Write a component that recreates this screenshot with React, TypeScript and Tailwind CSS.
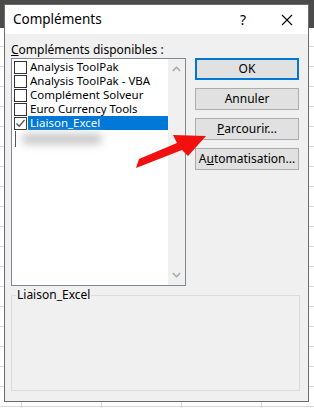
import React from 'react';

const items = ['Analysis ToolPak', 'Analysis ToolPak - VBA', 'Complément Solveur', 'Euro Currency Tools'];

function Check({ checked }: { checked?: boolean }) {
  return (
    <div className="w-[13px] h-[13px] border border-[#333333] bg-white shrink-0 flex items-center justify-center">
      {checked && (
        <svg width="11" height="11" viewBox="0 0 11 11">
          <path d="M1.5 5.5 L4.2 8.2 L9.5 2" fill="none" stroke="#555" strokeWidth="1.3" />
        </svg>
      )}
    </div>
  );
}

function Btn({ children, primary }: { children: React.ReactNode; primary?: boolean }) {
  return (
    <div
      className={
        'h-[22px] w-[104px] flex items-center justify-center bg-[#e1e1e1] text-[12px] text-black ' +
        (primary ? 'border-2 border-[#0078d7]' : 'border border-[#adadad]')
      }
    >
      {children}
    </div>
  );
}

export default function App() {
  return (
    <div className="relative w-[314px] h-[408px] overflow-hidden bg-white bg-[linear-gradient(#d9d9d9_1px,transparent_1px),linear-gradient(90deg,#d9d9d9_1px,transparent_1px)] bg-size-[80px_20px] bg-position-[21px_6px] font-['Noto_Sans',sans-serif] p-[4px]">
      <div className="absolute top-0 left-0 right-0 h-[28px] bg-[#4b4b4b]" />

      {/* dialog */}
      <div className="relative w-[305px] h-[398px] border border-[#6b6b6b] bg-[#f0f0f0] flex flex-col">
        <div className="h-[29px] bg-white flex items-center pl-[8px] shrink-0">
          <span className="text-[13.5px] text-black flex-1">Compléments</span>
          <span className="text-[14px] text-black w-[20px] text-center">?</span>
          <svg width="12" height="12" viewBox="0 0 12 12" className="ml-[28px] mr-[15px]">
            <path d="M1 1 L11 11 M11 1 L1 11" stroke="#000" strokeWidth="1.1" />
          </svg>
        </div>

        <div className="flex pl-[6px] pt-[8px]">
          <div className="flex flex-col">
            <div className="text-[12px] leading-[16px] text-black h-[16px]">
              <span className="underline">C</span>ompléments disponibles :
            </div>
            <div className="w-[175px] h-[228px] border border-[#828790] bg-white flex">
              <div className="flex-1 pt-[1px] pl-[2px] text-[11.5px] text-black">
                {items.map((t) => (
                  <div key={t} className="h-[14px] flex items-center">
                    <Check />
                    <span className="ml-[3px] leading-[14px]">{t}</span>
                  </div>
                ))}
                <div className="h-[14px] flex items-center">
                  <div className="outline outline-1 outline-dotted outline-[#444] -outline-offset-1">
                    <Check checked />
                  </div>
                  <span className="ml-[1px] leading-[14px] bg-[#0078d7] text-white pl-[2px] flex-1 h-[14px]">
                    Liaison_Excel
                  </span>
                </div>
                <div className="h-[18px] flex items-center">
                  <div className="w-[1px] h-[16px] bg-[#555] ml-[1px]" />
                  <div className="ml-[6px] w-[80px] h-[10px] bg-[#c4c4c4] rounded-full blur-[4px]" />
                </div>
              </div>
              <div className="w-[17px] bg-[#f0f0f0] flex flex-col items-center justify-between py-[7px]">
                <svg width="9" height="6" viewBox="0 0 9 6">
                  <path d="M0.8 5 L4.5 1.3 L8.2 5" fill="none" stroke="#a6a6a6" strokeWidth="1.4" />
                </svg>
                <svg width="9" height="6" viewBox="0 0 9 6">
                  <path d="M0.8 1 L4.5 4.7 L8.2 1" fill="none" stroke="#a6a6a6" strokeWidth="1.4" />
                </svg>
              </div>
            </div>
          </div>

          <div className="flex flex-col gap-[8px] ml-[9px] pt-[16px]">
            <Btn primary>OK</Btn>
            <Btn>Annuler</Btn>
            <Btn>
              <span className="underline">P</span>arcourir...
            </Btn>
            <Btn>
              A<span className="underline">u</span>tomatisation...
            </Btn>
          </div>
        </div>

        <div className="relative mt-[9px] ml-[6px] w-[289px] h-[96px] border border-[#dcdcdc]">
          <span className="absolute -top-[9px] left-[4px] bg-[#f0f0f0] px-[1px] text-[12px] leading-[16px] text-black">
            Liaison_Excel
          </span>
        </div>
      </div>

      {/* red arrow */}
      <svg className="absolute left-0 top-0 pointer-events-none" width="314" height="408" viewBox="0 0 314 408">
        <polygon points="136,168 139,159 177,143 173,135 206,136 188,156 182,150" fill="#f2100f" />
      </svg>
    </div>
  );
}
